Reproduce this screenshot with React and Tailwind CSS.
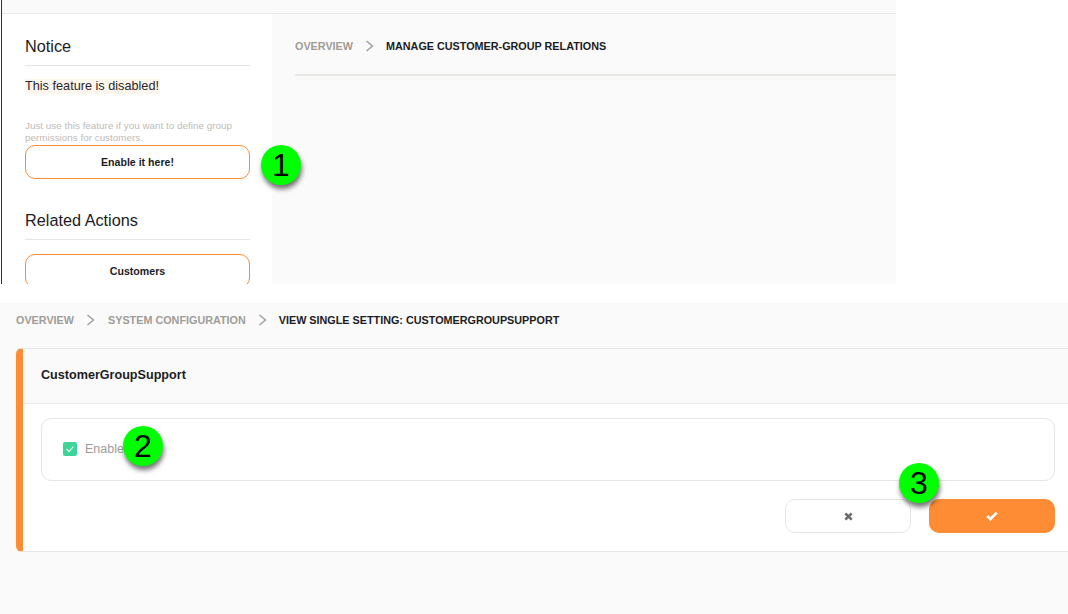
const font = { fontFamily: '"Liberation Sans", Arial, sans-serif' };

function Chevron() {
  return (
    <svg width="9" height="12" viewBox="0 0 9 12" fill="none" className="shrink-0">
      <path d="M1.5 1 L7.5 6 L1.5 11" stroke="#a09c98" strokeWidth="1.4" />
    </svg>
  );
}

function Badge({ n, className }) {
  return (
    <div
      className={
        'absolute flex h-10 w-10 items-center justify-center rounded-full bg-[#00ff00] text-[32px] leading-none text-black shadow-[1px_4px_5px_rgba(0,0,0,0.55)] ' +
        className
      }
    >
      {n}
    </div>
  );
}

function SideButton({ children }) {
  return (
    <button className="flex h-[34px] w-full shrink-0 items-center justify-center rounded-[10px] border border-[#fd8c35] bg-white pt-[2px] text-[10.6px] font-bold text-[#1c1c24]">
      {children}
    </button>
  );
}

export default function App() {
  return (
    <div className="relative h-[614px] w-[1068px] overflow-hidden bg-white" style={font}>
      {/* upper shot */}
      <div className="h-[284px] w-[896px] pl-px">
        <div className="flex h-full flex-col overflow-hidden border-l border-[#333]">
          <div className="h-[14px] shrink-0 border-b border-[#e8e8e8] bg-[#fafafa]" />
          <div className="flex min-h-0 flex-1">
            <aside className="w-[270px] shrink-0 overflow-hidden bg-white pl-[23px] pr-[22px]">
              <h2 className="flex h-[43px] items-end pb-[2px] text-[16.25px] leading-[18px] text-[#1c1c24]">Notice</h2>
              <div className="mt-[8px] h-px bg-[#e6e6e6]" />
              <div className="mt-[13px] h-[15px] w-[135px] bg-[#fdf6ec] text-[12.7px] leading-[14px] text-[#26262e] whitespace-nowrap">
                This feature is disabled!
              </div>
              <p className="mt-[26px] text-[9.9px] leading-[12px] text-[#c0bcb8]">
                Just use this feature if you want to define group permissions for customers.
              </p>
              <div className="mt-[1px]">
                <SideButton>Enable it here!</SideButton>
              </div>
              <h2 className="mt-[32px] text-[16.25px] leading-[18px] text-[#1c1c24]">Related Actions</h2>
              <div className="mt-[10px] h-px bg-[#e6e6e6]" />
              <div className="mt-[14px]">
                <SideButton>Customers</SideButton>
              </div>
            </aside>
            <main className="flex-1 bg-[#fafafa] pl-[23px]">
              <div className="flex h-[62px] items-center gap-[12px] border-b-2 border-[#e9e7e4] pt-[4px] text-[10.8px] font-bold uppercase whitespace-nowrap">
                <span className="text-[#a09c98]">Overview</span>
                <Chevron />
                <span className="text-[#1c1c24]">Manage customer-group relations</span>
              </div>
            </main>
          </div>
        </div>
      </div>

      {/* lower shot */}
      <div className="mt-[19px] h-[311px] bg-[#fafafa] pr-[13px] pl-[16px]">
        <div className="flex h-[36px] items-center gap-[12px] pb-[2px] text-[10.8px] font-bold uppercase whitespace-nowrap">
          <span className="text-[#a09c98]">Overview</span>
          <Chevron />
          <span className="ml-[1px] text-[#a09c98]">System configuration</span>
          <Chevron />
          <span className="text-[#1c1c24]">View single setting: CustomerGroupSupport</span>
        </div>
        <section className="mt-[9px] -mr-[13px] overflow-hidden rounded-l-[6px] border-y border-[#e8e6e3] border-l-[7px] border-l-[#fd8c35] bg-white">
          <div className="flex h-[55px] items-center border-b border-[#e8e8e8] bg-[#fafafa] pb-[1px] pl-[18px] text-[12.6px] font-bold text-[#1c1c24]">
            CustomerGroupSupport
          </div>
          <div className="pt-[14px] pr-[13px] pb-[18px] pl-[18px]">
            <div className="flex h-[63px] items-center gap-[8px] rounded-[10px] border border-[#e9e6e1] bg-white pb-[2px] pl-[21px]">
              <span className="flex h-[14px] w-[14px] items-center justify-center rounded-[2px] bg-[#3dd598]">
                <svg width="10" height="8" viewBox="0 0 10 8" fill="none">
                  <path d="M1.5 4 L4 6.5 L8.5 1.5" stroke="#fff" strokeWidth="1.1" />
                </svg>
              </span>
              <span className="pt-[2px] text-[12.5px] text-[#a09c98]">Enabled</span>
            </div>
            <div className="mt-[18px] flex justify-end gap-[18px]">
              <button className="flex h-[34px] w-[126px] items-center justify-center rounded-[10px] border border-[#e9e6e1] bg-white">
                <svg width="9" height="9" viewBox="0 0 9 9" fill="none">
                  <path d="M1.3 1.3 L7.7 7.7 M7.7 1.3 L1.3 7.7" stroke="#6f6b68" strokeWidth="2.6" />
                </svg>
              </button>
              <button className="flex h-[34px] w-[126px] items-center justify-center rounded-[10px] bg-[#fd8c35]">
                <svg width="12" height="10" viewBox="0 0 12 10" fill="none">
                  <path d="M1.2 5 L4.4 8 L10.8 1.6" stroke="#fff" strokeWidth="2.7" />
                </svg>
              </button>
            </div>
          </div>
        </section>
      </div>

      <Badge n="1" className="left-[261px] top-[145px]" />
      <Badge n="2" className="left-[123px] top-[426px]" />
      <Badge n="3" className="left-[899px] top-[463px]" />
    </div>
  );
}
